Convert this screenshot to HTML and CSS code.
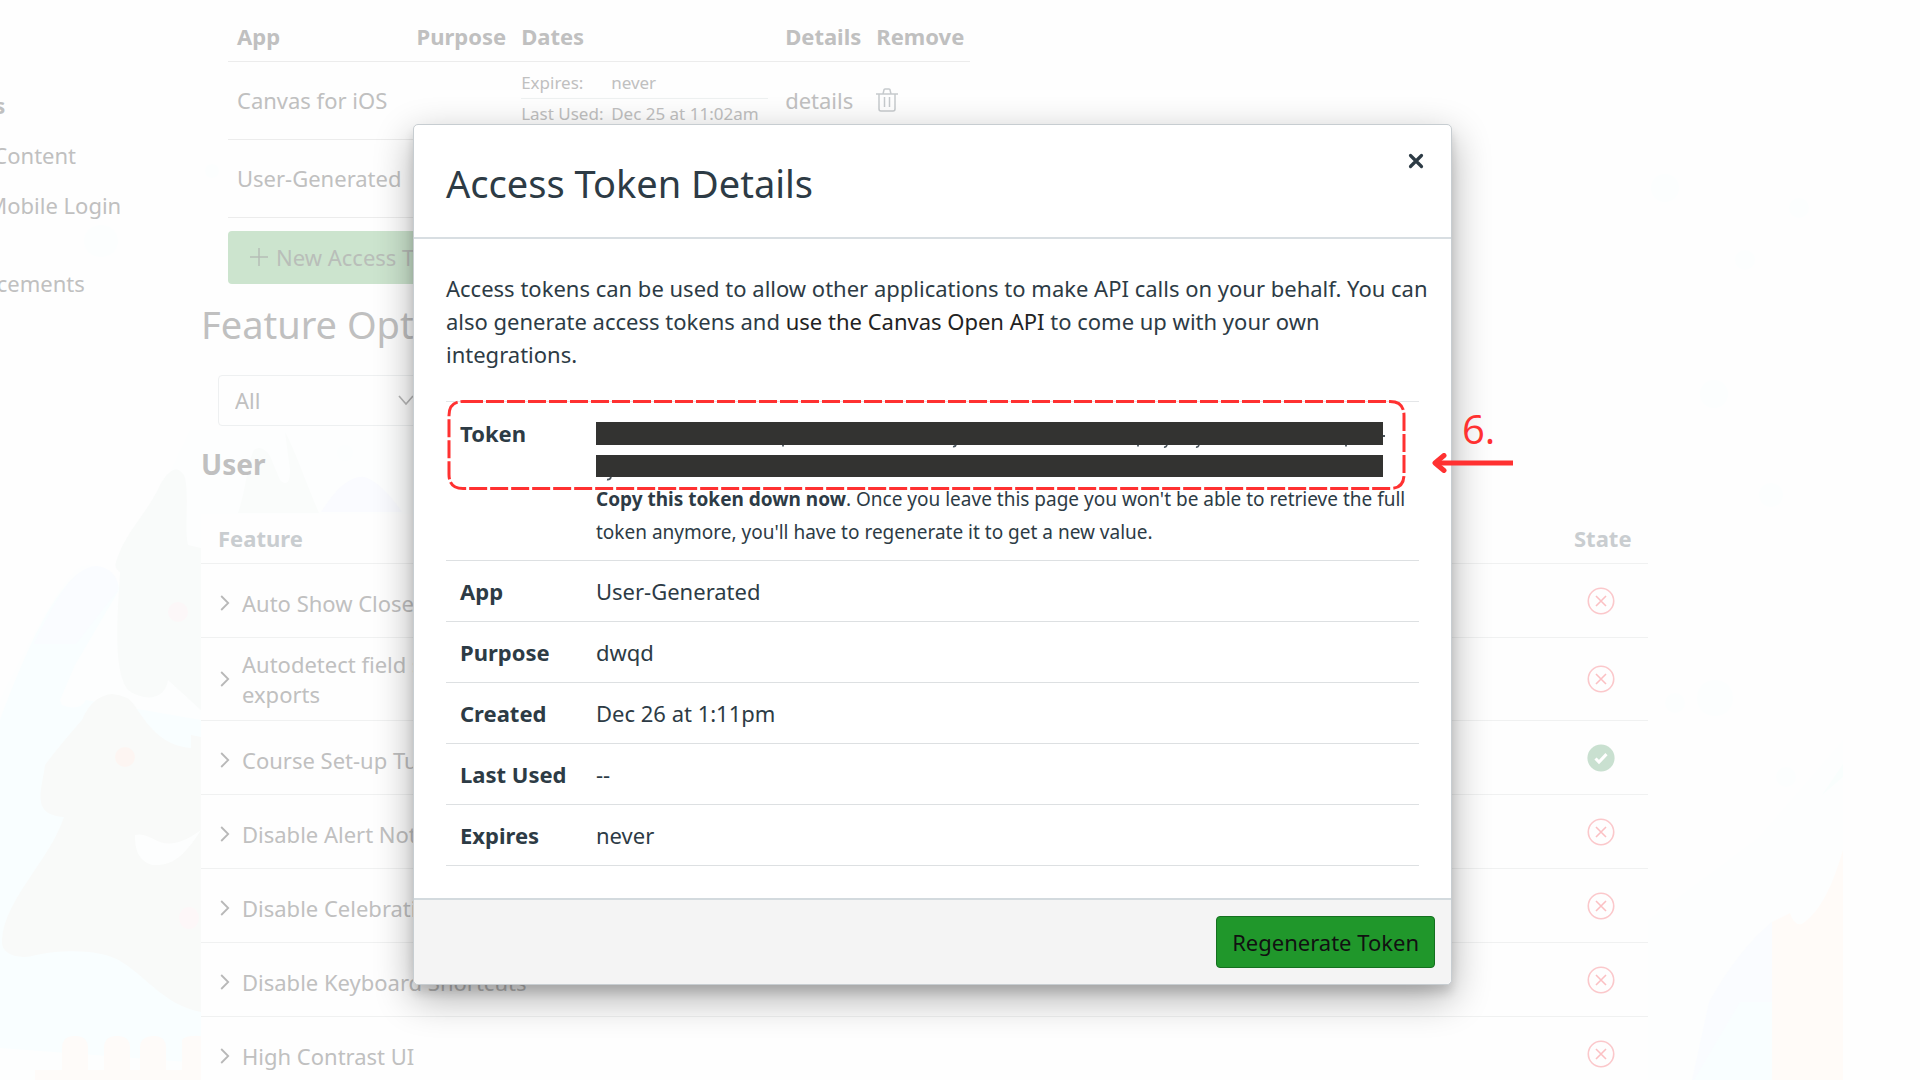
FILE: index.html
```html
<!DOCTYPE html>
<html lang="en">
<head>
<meta charset="utf-8">
<title>Access Token Details</title>
<link rel="stylesheet" href="styles.css">
</head>
<body>
<svg class="defs" width="0" height="0" aria-hidden="true">
  <symbol id="off" viewBox="0 0 28 28"><circle cx="14" cy="14" r="12.7" fill="none" stroke="#fbc8cb" stroke-width="1.6"/><path d="M9 9l10 10M19 9L9 19" fill="none" stroke="#fbc0c3" stroke-width="1.6"/></symbol>
  <symbol id="on" viewBox="0 0 28 28"><circle cx="14" cy="14" r="13.6" fill="#c9e0d0"/><path d="M8.500 14.500l3.500 3.600 7.500-8" fill="none" stroke="#fff" stroke-width="3"/></symbol>
  <symbol id="chev" viewBox="0 0 10 16"><path d="M1.200 1l7 7-7 7" fill="none" stroke="#b8b8b8" stroke-width="1.800"/></symbol>
</svg>

<div class="page">
  <svg class="scene scene-left" viewBox="0 0 413 1080" aria-hidden="true">
    <path d="M0 700C30 640 50 600 75 570C95 555 120 580 120 600C150 520 165 480 190 430L413 430V1080H0Z" fill="#fdfefe"/>
    <path d="M0 720C30 640 60 575 92 567C108 566 120 580 119 590L75 665L60 700L62 705Q80 712 86 700L201 720V1063L0 1048Z" fill="#f9feff"/>
    <path d="M34 644C60 590 75 568 96 566C110 567 119 577 118 590L76 644Z" fill="#fafcff"/>
    <path d="M116 562C126 530 146 516 160 485Q174 460 184 475C190 490 184 530 188 545L201 548V710L168 680C165 700 145 702 128 690C112 670 118 610 120 572Q114 568 116 562Z" fill="#f9fbfa"/>
    <path d="M82 720Q92 696 112 694Q128 695 135 706C150 730 165 746 191 748V735L201 737V830L182 843C165 872 132 865 136 838C142 828 155 846 175 842L201 830V1012C165 1005 150 980 122 962C100 948 60 950 36 955C20 960 0 955 2 940C4 900 50 860 64 817C30 815 42 790 45 765Q60 745 82 720Z" fill="#f9faf9"/>
    <path d="M135 835C155 830 160 860 201 830C182 860 170 866 152 865C138 860 135 850 135 835Z" fill="#fdfefe"/>
    <ellipse cx="125" cy="757" rx="10" ry="10" fill="#fdf5f2"/><ellipse cx="189" cy="918" rx="10" ry="11" fill="#fdf7f8"/><ellipse cx="178" cy="612" rx="10" ry="10" fill="#fcf7f8"/>
    <path d="M35 1080V1070H62V1048Q62 1036 75 1036Q88 1036 88 1048V1070H104V1048Q104 1036 117 1036Q130 1036 130 1048V1070H140V1048Q140 1036 154 1036Q166 1036 166 1048V1070H182V1040Q186 1035 201 1036V1080Z" fill="#fefbf9"/>
    <path d="M238 513C246 490 248 460 254 450Q262 444 270 456L280 480Q290 490 290 470L285 432C295 450 305 480 319 513Z" fill="#fafcfb"/>
    <path d="M321 512Q345 474 365 477Q383 484 402 512Z" fill="#fafbff"/>
    <g fill="#fcfefe"><ellipse cx="101" cy="241" rx="17" ry="16"/><circle cx="212" cy="171" r="7"/><circle cx="345" cy="453" r="8"/></g>
  </svg>
  <svg class="scene scene-right" viewBox="0 0 272 980" aria-hidden="true">
    <path d="M0 820L110 738L195 640V980H0Z" fill="#fdfefe"/>
    <path d="M61 902Q90 850 124 822V980H44Z" fill="#fafcff"/>
    <path d="M46 980L92 902H124V980Z" fill="#f9feff"/>
    <path d="M174 695L195 664V677Z" fill="#f9fefd"/>
    <path d="M124 980V822L142 813Q146 826 154 824C175 810 186 780 195 750V980Z" fill="#fffbf8"/>
    <g fill="#fcfefe"><circle cx="17" cy="88" r="14"/><circle cx="151" cy="108" r="10"/><circle cx="97" cy="160" r="10"/><circle cx="66" cy="294" r="14"/><circle cx="123" cy="395" r="12"/><circle cx="67" cy="598" r="18"/><circle cx="27" cy="603" r="10"/><circle cx="138" cy="677" r="10"/></g>
  </svg>

  <nav class="side">
    <a class="side-link current" href="#settings">Settings</a>
    <a class="side-link" href="#content">Shared Content</a>
    <a class="side-link login" href="#login">QR for Mobile Login</a>
    <a class="side-link" href="#announcements">Announcements</a>
  </nav>

  <main class="main">
    <section class="integrations">
      <table class="apps">
        <thead><tr><th>App</th><th>Purpose</th><th>Dates</th><th>Details</th><th>Remove</th></tr></thead>
        <tbody>
          <tr>
            <td>Canvas for iOS</td><td></td>
            <td><dl class="dates"><div><dt>Expires:</dt><dd>never</dd></div><div><dt>Last Used:</dt><dd>Dec 25 at 11:02am</dd></div></dl></td>
            <td><a class="details" href="#details">details</a></td>
            <td><button class="trash" aria-label="Remove"><svg width="22" height="24" viewBox="0 0 22 24" fill="none" stroke="#c6cacd" stroke-width="1.5"><path d="M0 6h22M7 6l1-4q0-1 1-1h4q1 0 1 1l1 4M3 6v15q0 2 2 2h12q2 0 2-2V6M8.500 9v10M13.500 9v10"/></svg></button></td>
          </tr>
          <tr><td>User-Generated</td><td></td><td></td><td></td><td></td></tr>
        </tbody>
      </table>
      <button class="new-token"><svg width="18" height="18" viewBox="0 0 18 18" stroke="#b5bdb6" stroke-width="1.500"><path d="M9 0v18M0 9h18"/></svg>New Access Token</button>
    </section>

    <h1 class="heading">Feature Options</h1>
    <div class="filter">
      <select class="select" aria-label="Filter"><option>All</option></select>
      <svg class="arrow" width="16" height="11" viewBox="0 0 16 11" fill="none" stroke="#b8b8b8" stroke-width="1.600"><path d="M1 1l7 8 7-8"/></svg>
    </div>
    <h2 class="group">User</h2>
    <table class="features">
      <thead><tr><th>Feature</th><th class="state">State</th></tr></thead>
      <tbody>
        <tr><td><span class="name"><svg width="10" height="16"><use href="#chev"/></svg>Auto Show Closed Captions</span></td><td class="state"><svg width="28" height="28"><use href="#off"/></svg></td></tr>
        <tr class="tall"><td><span class="name"><svg width="10" height="16"><use href="#chev"/></svg><span>Autodetect field separators<br>exports</span></span></td><td class="state"><svg width="28" height="28"><use href="#off"/></svg></td></tr>
        <tr><td><span class="name"><svg width="10" height="16"><use href="#chev"/></svg>Course Set-up Tutorial</span></td><td class="state"><svg width="28" height="28"><use href="#on"/></svg></td></tr>
        <tr><td><span class="name"><svg width="10" height="16"><use href="#chev"/></svg>Disable Alert Notification</span></td><td class="state"><svg width="28" height="28"><use href="#off"/></svg></td></tr>
        <tr><td><span class="name"><svg width="10" height="16"><use href="#chev"/></svg>Disable Celebrations</span></td><td class="state"><svg width="28" height="28"><use href="#off"/></svg></td></tr>
        <tr><td><span class="name"><svg width="10" height="16"><use href="#chev"/></svg>Disable Keyboard Shortcuts</span></td><td class="state"><svg width="28" height="28"><use href="#off"/></svg></td></tr>
        <tr><td><span class="name"><svg width="10" height="16"><use href="#chev"/></svg>High Contrast UI</span></td><td class="state"><svg width="28" height="28"><use href="#off"/></svg></td></tr>
      </tbody>
    </table>
  </main>

  <div class="overlay">
    <div class="modal" role="dialog" aria-labelledby="modal-title">
      <header class="modal-head">
        <h2 class="modal-title" id="modal-title">Access Token Details</h2>
        <button class="close" aria-label="Close"><svg width="16" height="16" viewBox="0 0 16 16" stroke="#2d3b45" stroke-width="3.200" stroke-linecap="round"><path d="M2.500 2.500l11 11M13.500 2.500l-11 11"/></svg></button>
      </header>
      <div class="modal-body">
        <p class="intro">Access tokens can be used to allow other applications to make API calls on your behalf. You can also generate access tokens and <a href="#api">use the Canvas Open API</a> to come up with your own integrations.</p>
        <div class="token-info">
          <table class="info">
            <tbody>
              <tr>
                <th scope="row">Token</th>
                <td>
                  <svg class="redacted" width="790" height="66" viewBox="0 0 790 66" role="img" aria-label="Redacted token"><path d="M0 5h787v23H0zM0 38h787v22H0z" fill="#333331"/><path d="M187 28v1.500M542 28v1.500M750 28v1.500M360 28q-1 2-3 1.500M571 28q-1 2.500-3 2M603 28q-1 2.500-3 2M15 60q-1 3-4 2.500M787 19h2" fill="none" stroke="#4a555d" stroke-width="1.800"/></svg>
                  <small><strong>Copy this token down now</strong>. Once you leave this page you won't be able to retrieve the full token anymore, you'll have to regenerate it to get a new value.</small>
                </td>
              </tr>
              <tr><th scope="row">App</th><td>User-Generated</td></tr>
              <tr><th scope="row">Purpose</th><td>dwqd</td></tr>
              <tr><th scope="row">Created</th><td>Dec 26 at 1:11pm</td></tr>
              <tr><th scope="row">Last Used</th><td>--</td></tr>
              <tr><th scope="row">Expires</th><td>never</td></tr>
            </tbody>
          </table>
          <svg class="outline" width="960" height="92" viewBox="0 0 960 92" aria-hidden="true"><path d="M18 2.500H943Q957 2.500 957 16.500V75.500Q957 89.500 943 89.500H16Q2 89.500 2 75.500V16.500Q2 2.500 16 2.500Z" fill="none" stroke="#ff3131" stroke-width="3" stroke-dasharray="18 3"/></svg>
          <div class="note">
            <span class="note-num">6.</span>
            <svg width="82" height="20" viewBox="0 0 82 20" fill="none" stroke="#ff3131" stroke-width="5"><path d="M4 10h78"/><path d="M13 2.500L4 10l9 7.500" stroke-linecap="round" stroke-linejoin="round"/></svg>
          </div>
        </div>
      </div>
      <footer class="modal-foot"><button class="regen">Regenerate Token</button></footer>
    </div>
  </div>
</div>
</body>
</html>
```
FILE: styles.css
```css
* { box-sizing: border-box; }
body { margin: 0; background: #fefefe; font: 22px/33px "Noto Sans", sans-serif; color: #2d3b45; }
button, select { font: inherit; }
a { color: inherit; text-decoration: none; }
svg { display: block; flex: none; }
.defs { position: absolute; }
.page { position: relative; display: flex; height: 100vh; overflow: hidden; color: #c0c0c0; }
.scene { position: absolute; }
.scene-left { left: 0; top: 0; width: 413px; height: 1080px; }
.scene-right { right: 0; bottom: 0; width: 272px; height: 980px; }

.side { position: relative; flex: none; width: 201px; padding-top: 89px; overflow: hidden; }
.side-link { display: block; margin: 0 0 17px -85px; white-space: nowrap; }
.side-link.current { font-weight: 700; }
.side-link.login { margin-bottom: 45px; }

.main { position: relative; flex: 1; margin-right: 272px; }
.integrations { padding: 20px 0 0 27px; }
.apps { border-collapse: collapse; }
.apps th, .apps td { padding: 0 6px 0 9px; text-align: left; white-space: nowrap; border-bottom: 1px solid #ececec; }
.apps th { height: 41px; padding-bottom: 7px; }
.apps td { height: 78px; }
.apps th:first-child { width: 173px; }
.apps th:nth-child(3) { width: 264px; }
.dates { width: 247px; margin: 0; padding-bottom: 3px; font-size: 17px; line-height: 30px; }
.dates div { display: grid; grid-template-columns: 90px 1fr; }
.dates div + div { border-top: 1px solid #eef1f1; }
.dates dd { margin: 0; }
.trash { display: block; padding: 0; border: 0; background: none; }
.new-token { display: flex; align-items: center; gap: 8px; height: 53px; margin-top: 13px; padding: 0 22px; border: 0; border-radius: 4px; background: #cce4ce; color: #b9beb9; }
.heading { margin: 14px 0 25px; font-size: 38px; line-height: 52px; font-weight: 400; }
.filter { position: relative; width: 220px; margin-left: 17px; }
.select { display: block; width: 100%; height: 51px; padding: 0 16px; border: 1px solid #eef0f1; border-radius: 4px; background: #fefefe; color: #c0c0c0; appearance: none; }
.arrow { position: absolute; right: 24px; top: 20px; }
.group { margin: 18px 0 30px; font-size: 28px; line-height: 40px; font-weight: 700; }
.features { width: 100%; border-collapse: collapse; background: #fefefe; }
.features th, .features td { padding: 0; border-bottom: 1px solid #f0f1f1; text-align: left; }
.features th { height: 50px; padding: 0 17px; color: #c9cdd0; }
.features td { height: 74px; line-height: 30px; }
.features .tall td { height: 83px; }
.features th.state { width: 96px; padding: 0 0 0 22px; }
td.state svg { margin-left: 35px; }
.name { display: flex; align-items: center; gap: 12px; padding: 5px 0 0 19px; }
.tall .name { padding-top: 0; }

.overlay { position: absolute; inset: 0; display: flex; justify-content: center; align-items: flex-start; padding: 124px 55px 0 0; }
.modal { width: 1039px; border: 1px solid #c7cdd1; border-radius: 5px; background: #fff; color: #2d3b45; box-shadow: 0 8px 10px rgba(0,0,0,.12), 0 13px 38px rgba(0,0,0,.32); }
.modal-head { display: flex; justify-content: space-between; align-items: flex-start; padding: 33px 27px 29px 32px; border-bottom: 2px solid #d8dee2; }
.modal-title { margin: 0; font-size: 38px; line-height: 50px; font-weight: 400; }
.close { margin-top: -5px; padding: 0; border: 0; background: none; }
.modal-body { padding: 33px 32px 32px; }
.intro { margin: 0 -20px 30px 0; }
.intro a { color: #222; }
.token-info { position: relative; }
.info { width: 100%; border-collapse: collapse; border-top: 1px solid #e4e6e8; }
.info th, .info td { padding: 14px 14px 13px; border-bottom: 1px solid #dde0e2; text-align: left; vertical-align: top; }
.info th { width: 136px; white-space: nowrap; }
.info tr:first-child th, .info tr:first-child td { padding: 15px 0 11px 14px; }
.info small { display: block; font-size: 19px; }
.info td { padding-right: 0; }
.outline { position: absolute; left: 1px; top: -2px; }
.redacted { overflow: visible; }
.note { position: absolute; right: -94px; top: 4px; }
.note-num { display: block; padding-left: 31px; color: #ff3131; font: 40px/48px "Open Sans", sans-serif; }
.modal-foot { display: flex; justify-content: flex-end; padding: 16px; border-top: 2px solid #d3dade; border-radius: 0 0 5px 5px; background: #f4f4f4; }
.regen { height: 52px; padding: 0 15px; border: 1px solid #14701f; border-radius: 4px; background: #20972b; color: #111; }
```
